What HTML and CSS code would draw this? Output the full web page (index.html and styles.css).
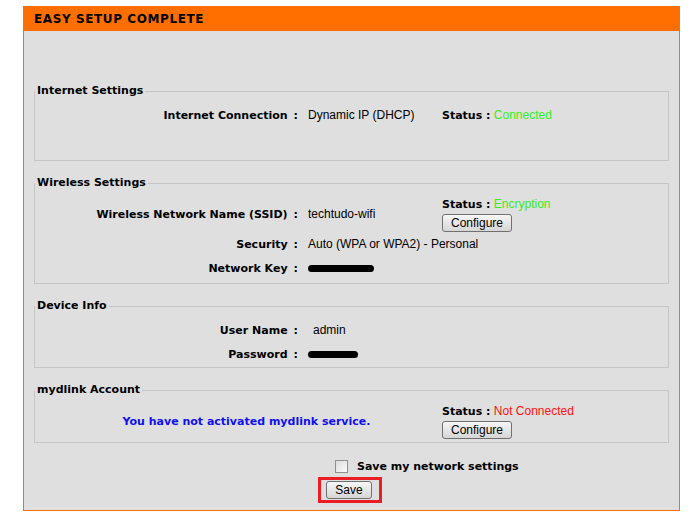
FILE: index.html
```html
<!DOCTYPE html>
<html lang="en">
<head>
  <meta charset="UTF-8">
  <title>Easy Setup Complete</title>
  <link rel="stylesheet" href="styles.css">
</head>
<body>

  <div class="box">
    <div class="box-title">EASY SETUP COMPLETE</div>

    <div class="box-body">

      <fieldset class="group group-internet">
        <legend>Internet Settings</legend>
        <div class="grid">
          <div class="label">Internet Connection<span class="colon">:</span></div>
          <div class="value">Dynamic IP (DHCP)</div>
          <div class="status-inline"><b>Status :</b>&nbsp;<span class="ok">Connected</span></div>
        </div>
      </fieldset>

      <fieldset class="group">
        <legend>Wireless Settings</legend>
        <div class="grid">
          <div class="label">Wireless Network Name (SSID)<span class="colon">:</span></div>
          <div class="value">techtudo-wifi</div>
          <div class="status">
            <div><b>Status :</b> <span class="ok">Encryption</span></div>
            <button class="btn btn-config" type="button">Configure</button>
          </div>

          <div class="label">Security<span class="colon">:</span></div>
          <div class="value">Auto (WPA or WPA2) - Personal</div>
          <div></div>

          <div class="label">Network Key<span class="colon">:</span></div>
          <div class="value"><span class="hidden-text key"></span></div>
          <div></div>
        </div>
      </fieldset>

      <fieldset class="group group-device">
        <legend>Device Info</legend>
        <div class="grid">
          <div class="label">User Name<span class="colon">:</span></div>
          <div class="value indent">admin</div>
          <div></div>

          <div class="label">Password<span class="colon">:</span></div>
          <div class="value"><span class="hidden-text pass"></span></div>
          <div></div>
        </div>
      </fieldset>

      <fieldset class="group">
        <legend>mydlink Account</legend>
        <div class="grid">
          <div class="notice">You have not activated mydlink service.</div>
          <div class="status">
            <div><b>Status :</b> <span class="bad">Not Connected</span></div>
            <button class="btn btn-config" type="button">Configure</button>
          </div>
        </div>
      </fieldset>

      <div class="save-row">
        <input type="checkbox" id="saveSettings">
        <label for="saveSettings">Save my network settings</label>
      </div>

      <div class="save-wrap">
        <span class="highlight"><button class="btn btn-save" type="button">Save</button></span>
      </div>

    </div>
  </div>

</body>
</html>
```

FILE: styles.css
```css
:root {
  --orange: #ff6f00;
  --panel: #dfdfdf;
  --line: #c6c6c6;
  --ok: #33ee22;
  --bad: #ff1111;
  --link: #1010ee;
  --bold-font: 'DejaVu Sans', Verdana, sans-serif;
}

body {
  margin: 0;
  background: #fff;
  color: #000;
  font-family: 'Liberation Sans', Arial, sans-serif;
  font-size: 12px;
}

b {
  font-family: var(--bold-font);
  font-size: 11px;
}

.box {
  box-sizing: border-box;
  width: 657px;
  margin: 6px 0 0 23px;
  border: 1px solid var(--orange);
  background: var(--panel);
}

.box-title {
  height: 24px;
  line-height: 25px;
  padding-left: 10px;
  background: var(--orange);
  font-family: var(--bold-font);
  font-weight: bold;
  font-size: 12px;
  letter-spacing: 0.6px;
}

.box-body {
  padding: 53px 0 7px;
}

.group {
  margin: 0 10px 15px;
  padding: 6px 0 3px;
  border: 1px solid var(--line);
  min-width: 0;
}

.group legend {
  padding: 0 2px;
  margin-left: 0;
  font-family: var(--bold-font);
  font-weight: bold;
  font-size: 11px;
  line-height: 14px;
}

.group-internet {
  padding-top: 5px;
  padding-bottom: 33px;
}

.group-device {
  padding-top: 5px;
  padding-bottom: 1px;
}

.grid {
  display: grid;
  grid-template-columns: 265px 142px 1fr;
  align-items: center;
}

.grid > div {
  min-height: 24px;
  display: flex;
  align-items: center;
  white-space: nowrap;
}

.label {
  justify-content: flex-end;
  font-family: var(--bold-font);
  font-weight: bold;
  font-size: 11px;
  padding-right: 2px;
}

.colon {
  margin-left: 6px;
}

.value {
  padding-left: 8px;
}

.value.indent {
  padding-left: 13px;
}

.grid > .status {
  display: block;
  line-height: 16px;
}

.ok {
  color: var(--ok);
}

.bad {
  color: var(--bad);
}

.notice {
  grid-column: 1 / 3;
  justify-content: center;
  padding-left: 16px;
  color: var(--link);
  font-family: var(--bold-font);
  font-weight: bold;
  font-size: 11px;
}

.hidden-text {
  display: inline-block;
  height: 7px;
  background: #000;
  border-radius: 4px;
}

.hidden-text.key {
  width: 66px;
}

.hidden-text.pass {
  width: 50px;
}

.btn {
  box-sizing: border-box;
  padding: 0;
  border: 1px solid #707070;
  border-radius: 3px;
  background: linear-gradient(#f7f7f7, #e6e6e6 50%, #d6d6d6);
  font-family: 'Liberation Sans', Arial, sans-serif;
  font-size: 12px;
  color: #000;
  line-height: 15px;
}

.btn-config {
  display: block;
  width: 70px;
  height: 18px;
  margin-top: 1px;
}

.btn-save {
  display: block;
  width: 46px;
  height: 18px;
}

.save-row {
  display: flex;
  align-items: center;
  height: 16px;
  margin-top: 14px;
  padding-left: 311px;
}

.save-row input {
  appearance: none;
  box-sizing: border-box;
  width: 13px;
  height: 13px;
  margin: 0 9px 0 0;
  border: 1px solid #8e8f8f;
  background: linear-gradient(135deg, #dcdcdc, #fbfbfb);
}

.save-row label {
  font-family: var(--bold-font);
  font-weight: bold;
  font-size: 11px;
}

.save-wrap {
  margin-top: 3px;
  text-align: center;
  padding-right: 3px;
}

.highlight {
  display: inline-block;
  border: 3px solid #ea1c24;
  padding: 1px 7px 1px 5px;
}
```
